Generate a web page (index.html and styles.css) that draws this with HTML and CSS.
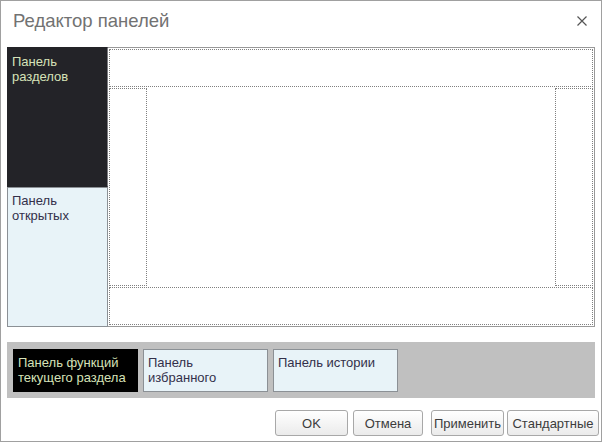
FILE: index.html
```html
<!DOCTYPE html>
<html lang="ru">
<head>
<meta charset="utf-8">
<title>Редактор панелей</title>
<link rel="stylesheet" href="styles.css">
</head>
<body>
<div class="window">
  <div class="header">
    <div class="title">Редактор панелей</div>
    <svg class="close" width="10" height="10" viewBox="0 0 10 10"><path d="M0.5 0.5 L9.5 9.5 M9.5 0.5 L0.5 9.5" stroke="#555" stroke-width="1.2" fill="none"/></svg>
  </div>
  <div class="main">
    <div class="left-col">
      <div class="panel dark">Панель<br>разделов</div>
      <div class="panel light">Панель<br>открытых</div>
    </div>
    <div class="workspace">
      <div class="slot slot-h"></div>
      <div class="middle">
        <div class="slot slot-v"></div>
        <div class="center"></div>
        <div class="slot slot-v"></div>
      </div>
      <div class="slot slot-h"></div>
    </div>
  </div>
  <div class="band">
    <div class="chip chip-black">Панель функций<br>текущего раздела</div>
    <div class="chip chip-light">Панель<br>избранного</div>
    <div class="chip chip-light">Панель истории</div>
  </div>
  <div class="buttons">
    <button class="btn btn-ok">OK</button>
    <button class="btn btn-cancel">Отмена</button>
    <button class="btn btn-apply">Применить</button>
    <button class="btn btn-default">Стандартные</button>
  </div>
</div>
</body>
</html>
```
FILE: styles.css
```css
* { box-sizing: border-box; }
html, body { margin: 0; padding: 0; background: #fff; }
body { font-family: "Liberation Sans", Arial, sans-serif; }

.window {
  width: 602px;
  height: 442px;
  border: 1px solid #a0a0a0;
  background: #fff;
  display: flex;
  flex-direction: column;
}

.header {
  height: 46px;
  display: flex;
  justify-content: space-between;
  align-items: flex-start;
  padding: 10px 14px 0 12px;
}
.title {
  font-size: 18.5px;
  line-height: 20px;
  color: #727272;
}
.close { margin-top: 5px; display: block; }

.main {
  display: flex;
  margin: 0 6px;
  height: 280px;
}
.left-col {
  width: 101px;
  display: flex;
  flex-direction: column;
}
.panel {
  height: 140px;
  font-size: 13px;
  line-height: 15px;
  padding: 6px 4px;
}
.dark {
  background: #232328;
  border: 1px solid #232328;
  border-right-color: #7c7c80;
  color: #d6e2b8;
}
.light {
  background: #e8f3f8;
  border: 1px solid #8b9095;
  color: #33304a;
  padding-top: 5px;
}

.workspace {
  width: 487px;
  border: 1px solid #999;
  border-left: none;
  padding: 1px;
  display: flex;
  flex-direction: column;
  gap: 1px;
}
.slot { border: 1px dotted #808080; }
.slot-h { height: 38px; }
.middle {
  flex: 1;
  display: flex;
  gap: 1px;
}
.slot-v { width: 38px; }
.center { flex: 1; }

.band {
  margin: 15px 6px 0;
  height: 56px;
  background: #c0c0c0;
  padding: 7px 6px;
  display: flex;
  gap: 5px;
}
.chip {
  width: 125px;
  height: 43px;
  border: 1px solid #8b9095;
  padding: 5px 4px;
  font-size: 13px;
  line-height: 15px;
}
.chip-black {
  background: #000;
  border-color: #000;
  color: #d6e2b8;
}
.chip-light {
  background: #e8f3f8;
  color: #33304a;
}

.buttons {
  margin-top: 12px;
  display: flex;
  justify-content: flex-end;
  padding-right: 2px;
}
.btn {
  height: 26px;
  border: 1px solid #a8a8a8;
  border-radius: 3px;
  background: linear-gradient(#ffffff, #ebebeb);
  font-family: "Liberation Sans", Arial, sans-serif;
  font-size: 13px;
  color: #3c3c3c;
  padding: 0;
}
.btn-ok { width: 73px; }
.btn-cancel { width: 70px; margin-left: 5px; }
.btn-apply { width: 73px; margin-left: 8px; }
.btn-default { width: 92px; margin-left: 3px; }
```
